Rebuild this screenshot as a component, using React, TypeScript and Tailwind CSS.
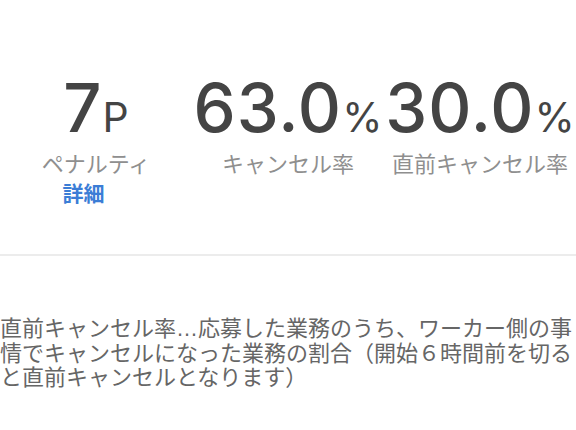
import React from 'react';

const stats = [
  { value: '7', unit: 'P', label: 'ペナルティ', detail: true },
  { value: '63.0', unit: '%', label: 'キャンセル率', detail: false },
  { value: '30.0', unit: '%', label: '直前キャンセル率', detail: false },
];

const jp = { fontFamily: '"Liberation Sans", "Noto Sans CJK JP", sans-serif' };

export default function App() {
  return (
    <div className="w-[576px] h-[430px] bg-white overflow-hidden" style={jp}>
      <div className="grid grid-cols-3 pt-[74px] h-[254px]">
        {stats.map((s) => (
          <div key={s.label} className="flex flex-col items-center">
            <div
              className="flex items-baseline text-[#444444] whitespace-nowrap"
              style={{ fontFamily: 'Inter, "Liberation Sans", sans-serif' }}
            >
              <span className="text-[67px] leading-none font-medium tracking-[1px]">{s.value}</span>
              <span className="text-[41px] leading-none font-normal">{s.unit}</span>
            </div>
            <div className="mt-[13px] text-[22px] leading-none text-[#8f8f8f] whitespace-nowrap">
              {s.label}
            </div>
            {s.detail && (
              <button className="mt-[7px] pr-[25px] text-[21px] leading-none font-bold text-[#3b7dd6]">
                詳細
              </button>
            )}
          </div>
        ))}
      </div>
      <div className="h-[2px] bg-[#ececec]" />
      <p className="mt-[61px] text-[22px] leading-[24.5px] text-[#666666]">
        直前キャンセル率…応募した業務のうち、ワーカー側の事情でキャンセルになった業務の割合（開始６時間前を切ると直前キャンセルとなります）
      </p>
    </div>
  );
}
